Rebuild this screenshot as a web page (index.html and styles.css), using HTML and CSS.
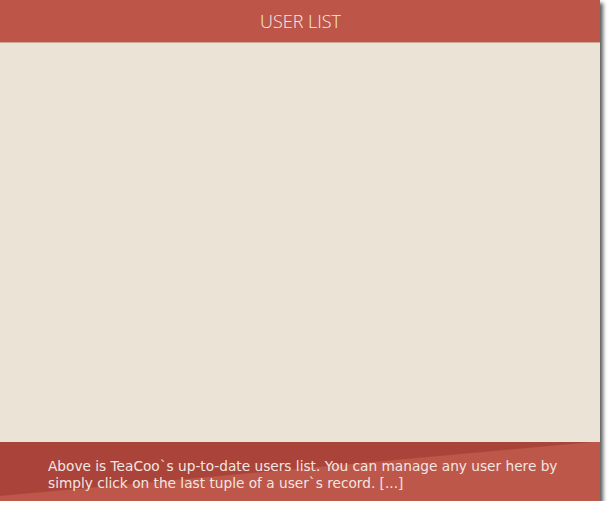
FILE: index.html
```html
<!DOCTYPE html>
<html>
<head>
<meta charset="utf-8">
<link rel="stylesheet" href="styles.css">
</head>
<body>
<div class="panel">
  <div class="header">USER LIST</div>
  <div class="content"></div>
  <div class="footer">
    <p class="note">Above is TeaCoo`s up-to-date users list. You can manage any user here by simply click on the last tuple of a user`s record. [...]</p>
  </div>
</div>
</body>
</html>
```
FILE: styles.css
```css
html, body {
  margin: 0;
  padding: 0;
  background: #ffffff;
}
.panel {
  width: 600px;
  height: 501px;
  display: flex;
  flex-direction: column;
  box-shadow: 3px 3px 4px rgba(0, 0, 0, 0.65);
}
.header {
  height: 43px;
  background: #bd5649;
  color: #f6ece8;
  font-family: "Open Sans", "DejaVu Sans", sans-serif;
  font-weight: 300;
  font-size: 18px;
  display: flex;
  align-items: center;
  justify-content: center;
  padding-left: 1px;
  border-bottom: 1px solid #c9a898;
  box-sizing: border-box;
}
.content {
  flex: 1;
  background: #ebe4d6;
}
.footer {
  height: 59px;
  background: linear-gradient(174.8deg, #aa4339 0%, #aa4339 47%, #bc574a 48%, #bc574a 100%);
  padding: 16px 30px 0 48px;
  box-sizing: border-box;
}
.note {
  margin: 0;
  color: #f3e6e2;
  font-family: "DejaVu Sans", sans-serif;
  font-size: 13.7px;
  line-height: 17px;
}
```
